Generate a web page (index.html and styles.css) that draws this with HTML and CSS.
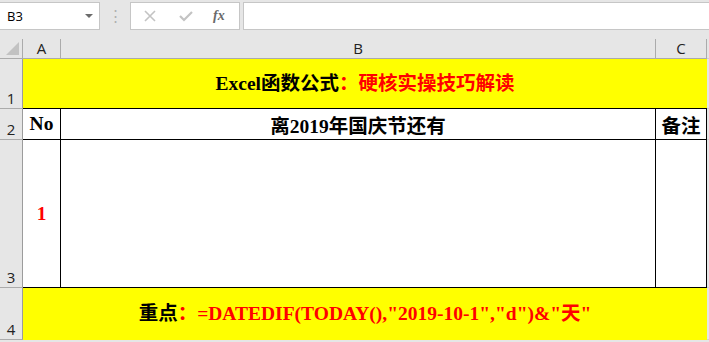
FILE: index.html
```html
<!DOCTYPE html>
<html lang="zh-CN">
<head>
    <meta charset="UTF-8">
    <title>Excel函数公式</title>
    <link rel="stylesheet" href="styles.css">
</head>
<body>
    <div class="formula-bar">
        <div class="name-box">
            <span>B3</span>
            <span class="caret"></span>
        </div>
        <div class="grip">⋮</div>
        <div class="fx-box">
            <svg class="tool" width="14" height="14" viewBox="0 0 14 14"><path d="M2 2 L12 12 M12 2 L2 12" stroke="#c3c3c3" stroke-width="1.6"/></svg>
            <svg class="tool" width="16" height="14" viewBox="0 0 16 14"><path d="M2 7 L6 11 L14 3" stroke="#c3c3c3" stroke-width="2.2" fill="none"/></svg>
            <span class="fx">fx</span>
        </div>
        <div class="formula-input"></div>
    </div>

    <div class="sheet">
        <div class="corner"><span></span></div>
        <div class="col-head">A</div>
        <div class="col-head">B</div>
        <div class="col-head">C</div>
        <div class="col-rest"></div>

        <!-- row 1 -->
        <div class="row-head">1</div>
        <div class="cell banner title">Excel函数公式<span class="red">：硬核实操技巧解读</span></div>
        <div class="col-rest"></div>

        <!-- row 2 -->
        <div class="row-head">2</div>
        <div class="cell grid">No</div>
        <div class="cell grid">离2019年国庆节还有</div>
        <div class="cell grid">备注</div>
        <div class="col-rest"></div>

        <!-- row 3 -->
        <div class="row-head">3</div>
        <div class="cell grid red">1</div>
        <div class="cell grid"></div>
        <div class="cell grid"></div>
        <div class="col-rest"></div>

        <!-- row 4 -->
        <div class="row-head">4</div>
        <div class="cell banner note">重点<span class="red">：=DATEDIF(TODAY(),"2019-10-1","d")&amp;"天"</span></div>
        <div class="col-rest"></div>
    </div>
</body>
</html>
```

FILE: styles.css
```css
body {
    margin: 0;
    width: 709px;
    height: 342px;
    overflow: hidden;
    background: #e6e6e6;
    font-family: "Liberation Sans", sans-serif;
}
.formula-bar {
    display: flex;
    align-items: flex-start;
    height: 39px;
    padding-top: 2px;
    box-sizing: border-box;
}
.name-box {
    display: flex;
    align-items: center;
    justify-content: space-between;
    width: 101px;
    height: 28px;
    margin-left: -1px;
    padding: 0 6px 0 7px;
    box-sizing: border-box;
    background: #fff;
    border: 1px solid #c6c6c6;
    font-family: "Open Sans", sans-serif;
    font-size: 13px;
    color: #000;
}
.caret {
    width: 0;
    height: 0;
    border-left: 4px solid transparent;
    border-right: 4px solid transparent;
    border-top: 4px solid #6b6b6b;
}
.grip {
    width: 30px;
    height: 28px;
    line-height: 28px;
    text-align: center;
    color: #b0b0b0;
    font-size: 15px;
}
.fx-box {
    display: flex;
    align-items: center;
    width: 110px;
    height: 28px;
    box-sizing: border-box;
    background: #fff;
    border: 1px solid #c6c6c6;
    padding-left: 12px;
}
.tool {
    margin-right: 21px;
}
.fx {
    margin-left: -2px;
    font-family: "Liberation Serif", serif;
    font-style: italic;
    font-weight: bold;
    font-size: 14px;
    color: #6a6a6a;
}
.formula-input {
    flex: 1;
    height: 28px;
    margin-left: 3px;
    box-sizing: border-box;
    background: #fff;
    border: 1px solid #c6c6c6;
    border-right: none;
}
.sheet {
    display: grid;
    grid-template-columns: 23px 38px 595px 51px 1fr;
    grid-template-rows: 20px 50px 31px 148px 52px;
}
.corner {
    position: relative;
    border-right: 1px solid #ababab;
    border-bottom: 1px solid #ababab;
}
.corner span {
    position: absolute;
    right: 3px;
    bottom: 3px;
    width: 0;
    height: 0;
    border-left: 13px solid transparent;
    border-bottom: 13px solid #c2c2c2;
}
.col-head {
    display: flex;
    align-items: flex-end;
    justify-content: center;
    padding-bottom: 1px;
    border-right: 1px solid #ababab;
    border-bottom: 1px solid #ababab;
    font-family: "Open Sans", sans-serif;
    font-size: 15px;
    line-height: 18px;
    color: #222;
}
.col-rest {
    border-bottom: 1px solid #d0d0d0;
}
.row-head {
    display: flex;
    align-items: flex-end;
    justify-content: center;
    padding-bottom: 1px;
    border-right: 1px solid #9c9c9c;
    border-bottom: 1px solid #ababab;
    font-family: "Open Sans", sans-serif;
    font-size: 15px;
    line-height: 18px;
    color: #222;
}
.cell {
    display: flex;
    align-items: center;
    justify-content: center;
    box-sizing: border-box;
    background: #fff;
    font-family: "Liberation Serif", "Noto Sans CJK SC", serif;
    font-weight: bold;
    font-size: 19.5px;
    color: #000;
}
.banner {
    grid-column: span 3;
    background: #ffff00;
}
.title {
    border-bottom: 1px solid #000;
    padding-bottom: 4px;
}
.note {
    padding-bottom: 5px;
}
.grid {
    border-right: 1px solid #000;
    border-bottom: 1px solid #000;
}
.red {
    color: #ff0000;
}
```
